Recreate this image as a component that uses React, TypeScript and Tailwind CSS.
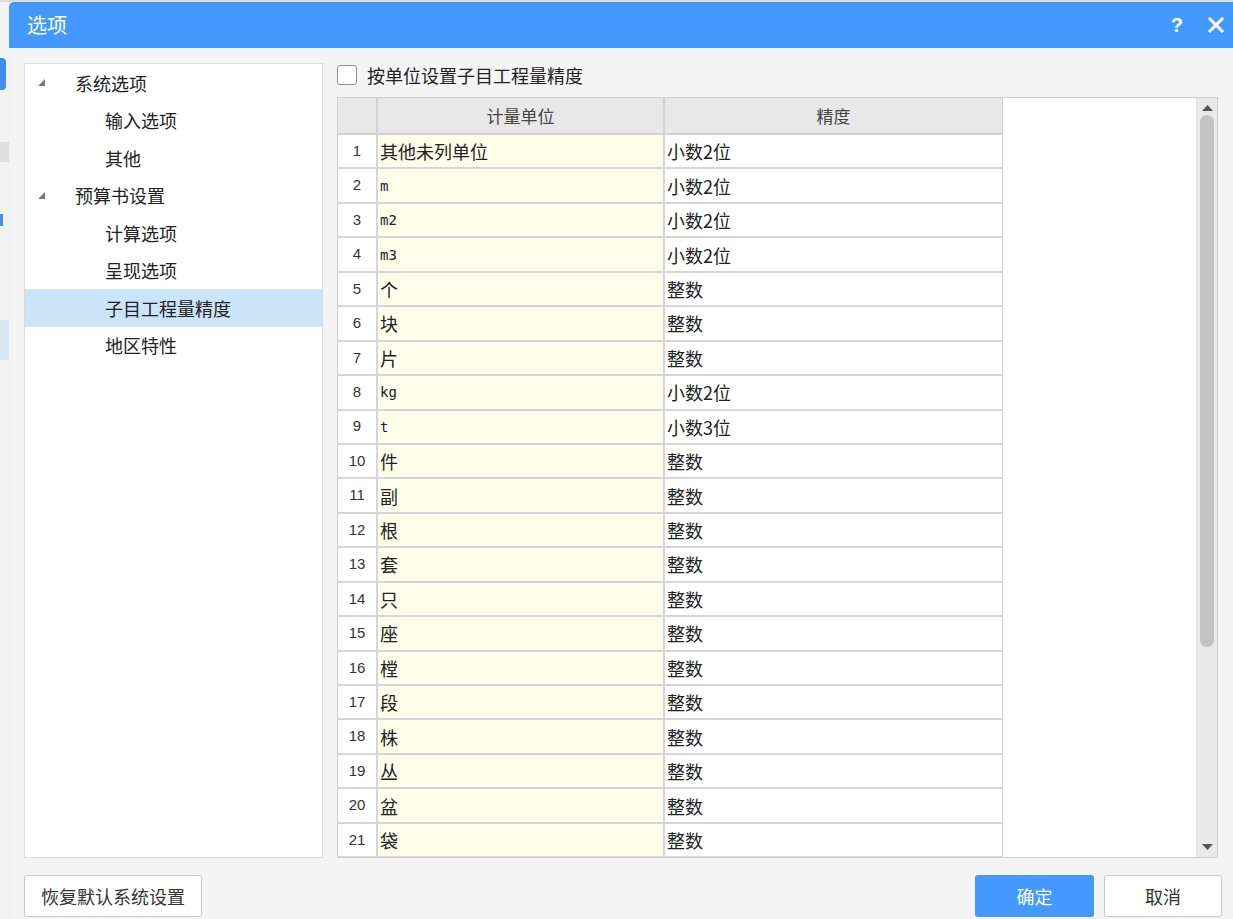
import React from 'react'

const font = { fontFamily: '"Noto Sans CJK SC", "Noto Sans", sans-serif' }

const rows: [string, string, boolean][] = [
  ['其他未列单位', '小数2位', false],
  ['m', '小数2位', true],
  ['m2', '小数2位', true],
  ['m3', '小数2位', true],
  ['个', '整数', false],
  ['块', '整数', false],
  ['片', '整数', false],
  ['kg', '小数2位', true],
  ['t', '小数3位', true],
  ['件', '整数', false],
  ['副', '整数', false],
  ['根', '整数', false],
  ['套', '整数', false],
  ['只', '整数', false],
  ['座', '整数', false],
  ['樘', '整数', false],
  ['段', '整数', false],
  ['株', '整数', false],
  ['丛', '整数', false],
  ['盆', '整数', false],
  ['袋', '整数', false],
]

const tree = [
  { label: '系统选项', level: 0 },
  { label: '输入选项', level: 1 },
  { label: '其他', level: 1 },
  { label: '预算书设置', level: 0 },
  { label: '计算选项', level: 1 },
  { label: '呈现选项', level: 1 },
  { label: '子目工程量精度', level: 1, selected: true },
  { label: '地区特性', level: 1 },
]

function Caret() {
  return (
    <svg width="9" height="9" viewBox="0 0 9 9" className="shrink-0">
      <polygon points="1,8 8,8 8,1" fill="#7a7a7a" />
    </svg>
  )
}

export default function App() {
  return (
    <div className="h-[919px] w-[1233px] overflow-hidden bg-[#ececec] text-[#222]" style={font}>
      <div className="h-[2px] bg-[#dcdcdc]" />
      <div className="flex h-[917px]">
        {/* app behind the dialog */}
        <div className="flex w-[9px] flex-col bg-[#f2f2f2]">
          <div className="mt-[56px] h-[32px] w-[6px] rounded-r-sm bg-[#3d8ff0]" />
          <div className="mt-[52px] h-[20px] bg-[#dedede]" />
          <div className="mt-[52px] h-[12px] w-[3px] bg-[#4a90e2]" />
          <div className="mt-[94px] h-[40px] bg-[#d6e6f5]" />
        </div>

        {/* dialog */}
        <div className="flex flex-1 flex-col overflow-hidden rounded-tl-[5px] bg-[#f4f4f4]">
          <div className="flex h-[46px] shrink-0 items-center bg-[#4499ff] pl-[18px] pr-[6px] text-white">
            <span className="text-[20px] leading-none">选项</span>
            <span className="ml-auto text-[20px] font-bold leading-none" style={{ fontFamily: '"Liberation Sans", sans-serif' }}>?</span>
            <svg width="16" height="16" viewBox="0 0 16 16" className="ml-[25px] mr-[3px]">
              <path d="M2 2 L14 14 M14 2 L2 14" stroke="white" strokeWidth="3" strokeLinecap="square" />
            </svg>
          </div>

          <div className="flex flex-col px-[15px] pt-[15px]">
            <div className="flex h-[795px] gap-[14px]">
              {/* tree */}
              <div className="w-[299px] border border-[#dcdcdc] bg-white">
                {tree.map((t) => (
                  <div
                    key={t.label}
                    className={`flex h-[37.5px] items-center text-[18px] leading-none ${t.selected ? 'bg-[#cce4f7]' : ''}`}
                  >
                    {t.level === 0 ? (
                      <>
                        <span className="ml-[12px] w-[9px]"><Caret /></span>
                        <span className="ml-[29px]">{t.label}</span>
                      </>
                    ) : (
                      <span className="ml-[80px]">{t.label}</span>
                    )}
                  </div>
                ))}
              </div>

              {/* right */}
              <div className="flex flex-1 flex-col">
                <div className="flex h-[34px] items-start">
                  <label className="flex items-center gap-[10px] pt-[2px]">
                    <span className="h-[20px] w-[20px] rounded-[3px] border border-[#8f8f8f] bg-white" />
                    <span className="text-[18px] leading-none">按单位设置子目工程量精度</span>
                  </label>
                </div>
                <div className="flex flex-1 overflow-hidden border border-[#cfcfcf] bg-white">
                  <div className="flex-1 overflow-hidden">
                    <div className="w-[665px] border-r border-[#cfcfcf]">
                      <div className="flex h-[37px] border-b-2 border-[#d2d2d2] bg-[#e8e8e8] text-[17px] text-[#444]">
                        <div className="w-[40px] border-r-2 border-[#d2d2d2]" />
                        <div className="flex w-[287px] items-center justify-center border-r-2 border-[#d2d2d2] leading-none">计量单位</div>
                        <div className="flex flex-1 items-center justify-center leading-none">精度</div>
                      </div>
                      {rows.map(([unit, prec, latin], i) => (
                        <div key={i} className="flex h-[34.45px] border-b-2 border-[#d6d6d6]">
                          <div
                            className="flex w-[40px] items-center justify-center border-r-2 border-[#d6d6d6] text-[15px] text-[#333]"
                            style={{ fontFamily: '"Liberation Sans", sans-serif' }}
                          >
                            {i + 1}
                          </div>
                          <div className="flex w-[287px] items-center border-r-2 border-[#d6d6d6] bg-[#fefeeb] pl-[2px] text-[18px] leading-none">
                            {latin ? (
                              <span className="text-[14px] font-medium" style={{ fontFamily: '"DejaVu Sans Mono", monospace' }}>{unit}</span>
                            ) : (
                              unit
                            )}
                          </div>
                          <div className="flex flex-1 items-center pl-[2px] text-[18px] leading-none">{prec}</div>
                        </div>
                      ))}
                    </div>
                  </div>
                  {/* scrollbar */}
                  <div className="flex w-[21px] flex-col items-center border-l border-[#e0e0e0] bg-[#e9e9e9]">
                    <svg width="11" height="7" viewBox="0 0 11 7" className="mt-[7px]">
                      <polygon points="0,6 5.5,0 11,6" fill="#555" />
                    </svg>
                    <div className="mt-[3px] h-[532px] w-[14px] rounded-full bg-[#c3c3c3]" />
                    <div className="flex-1" />
                    <svg width="11" height="7" viewBox="0 0 11 7" className="mb-[6px]">
                      <polygon points="0,0 11,0 5.5,6" fill="#555" />
                    </svg>
                  </div>
                </div>
              </div>
            </div>

            {/* footer */}
            <div className="mt-[17px] flex items-center">
              <button className="h-[42px] w-[178px] rounded-[3px] border border-[#c8c8c8] bg-white text-[18px] leading-none text-[#333]">
                恢复默认系统设置
              </button>
              <button className="ml-auto h-[42px] w-[119px] rounded-[3px] bg-[#4499ff] text-[18px] leading-none text-white">
                确定
              </button>
              <button className="ml-[10px] mr-[-4px] h-[42px] w-[118px] rounded-[3px] border border-[#c8c8c8] bg-white text-[18px] leading-none text-[#333]">
                取消
              </button>
            </div>
          </div>
        </div>
      </div>
    </div>
  )
}
